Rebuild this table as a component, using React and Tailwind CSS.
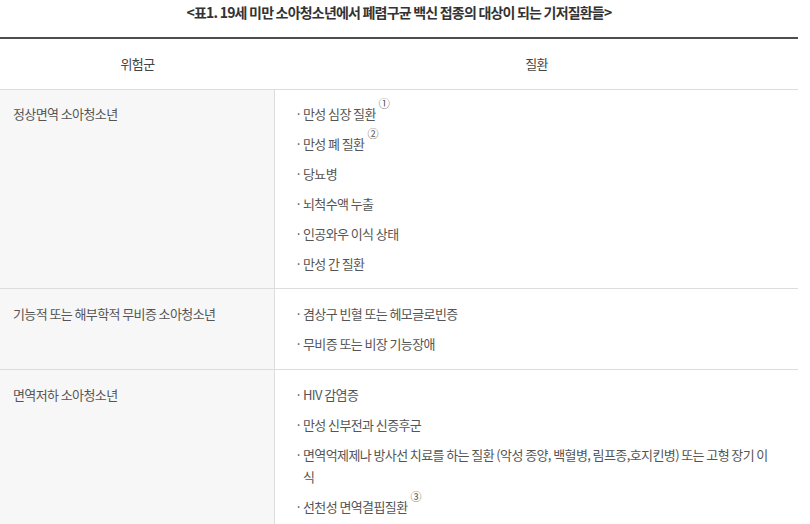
import React from 'react';

const rows = [
  {
    group: '정상면역 소아청소년',
    pad: 'py-[13px]',
    items: [
      { text: '만성 심장 질환', note: '①' },
      { text: '만성 폐 질환', note: '②' },
      { text: '당뇨병' },
      { text: '뇌척수액 누출' },
      { text: '인공와우 이식 상태' },
      { text: '만성 간 질환' },
    ],
  },
  {
    group: '기능적 또는 해부학적 무비증 소아청소년',
    pad: 'py-[14px]',
    items: [{ text: '겸상구 빈혈 또는 헤모글로빈증' }, { text: '무비증 또는 비장 기능장애' }],
  },
  {
    group: '면역저하 소아청소년',
    pad: 'py-[14px]',
    items: [
      { text: 'HIV 감염증' },
      { text: '만성 신부전과 신증후군' },
      { text: '면역억제제나 방사선 치료를 하는 질환 (악성 종양, 백혈병, 림프종,호지킨병) 또는 고형 장기 이식' },
      { text: '선천성 면역결핍질환', note: '③' },
    ],
  },
];

const App = () => {
  return (
    <div className="min-h-screen bg-white font-['Noto_Sans_CJK_KR','Noto_Sans',sans-serif] text-[#555] tracking-[-0.6px]">
      <div className="w-[798px]">
        <p className="h-[25px] text-center text-[14px] font-semibold leading-[25px] tracking-[-0.8px] text-[#333]">
          &lt;표1. 19세 미만 소아청소년에서 폐렴구균 백신 접종의 대상이 되는 기저질환들&gt;
        </p>

        <div className="mt-[12px] border-t-2 border-[#4d4d4d]">
          {/* header */}
          <div className="flex h-[51px] border-b border-[#ddd] text-[13px] text-[#444]">
            <div className="flex w-[275px] items-center justify-center">위험군</div>
            <div className="flex flex-1 items-center justify-center">질환</div>
          </div>

          {rows.map((row) => (
            <div key={row.group} className="flex border-b border-[#ddd] text-[13px] leading-[22px]">
              <div className={`w-[275px] shrink-0 border-r border-[#ddd] bg-[#f7f7f7] pl-[13px] ${row.pad}`}>
                {row.group}
              </div>
              <ul className={`flex flex-1 flex-col gap-[8px] pl-[20px] pr-[26px] ${row.pad}`}>
                {row.items.map((item) => (
                  <li key={item.text} className="flex">
                    <span className="w-[8px] shrink-0">·</span>
                    <span>
                      {item.text}
                      {item.note && (
                        <sup className="ml-[3px] align-[6px] text-[11px] leading-none">{item.note}</sup>
                      )}
                    </span>
                  </li>
                ))}
              </ul>
            </div>
          ))}
        </div>
      </div>
    </div>
  );
};

export default App;
